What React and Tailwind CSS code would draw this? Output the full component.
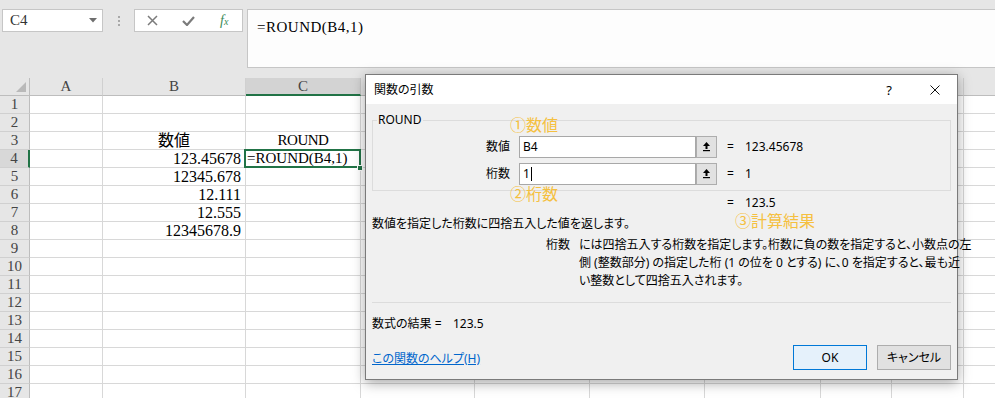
import React from 'react';

const GRID = "grid grid-cols-[30px_73px_143px_115px_114px_115px_115px_116px_71px_72px_72px]";
const LETTERS = ['A', 'B', 'C', 'D', 'E', 'F', 'G', 'H', 'I', 'J'];

const CELLS = {
  3: { B: ['数値', 'center'], C: ['ROUND', 'center'] },
  4: { B: ['123.45678', 'right'] },
  5: { B: ['12345.678', 'right'] },
  6: { B: ['12.111', 'right'] },
  7: { B: ['12.555', 'right'] },
  8: { B: ['12345678.9', 'right'] },
};

function TopBar() {
  return (
    <div className="h-[78px] bg-[#e6e6e6] flex items-start pt-[9px] pl-[2px]">
      <div className="w-[101px] h-[23px] bg-white border border-[#c6c6c6] flex items-center pl-[7px] pr-[5px] justify-between">
        <span className="font-['Liberation_Serif',serif] text-[15px] leading-none text-[#333]">C4</span>
        <svg width="8" height="5" viewBox="0 0 8 5"><polygon points="0,0 8,0 4,4.5" fill="#6e6e6e" /></svg>
      </div>
      <div className="w-[31px] h-[23px] flex flex-col items-center justify-center gap-[2px]">
        <span className="w-[2px] h-[2px] bg-[#a8a8a8]" />
        <span className="w-[2px] h-[2px] bg-[#a8a8a8]" />
        <span className="w-[2px] h-[2px] bg-[#a8a8a8]" />
      </div>
      <div className="w-[109px] h-[23px] bg-white border border-[#c6c6c6] flex items-center">
        <div className="w-[36px] flex justify-center">
          <svg width="11" height="11" viewBox="0 0 11 11"><path d="M1 1 L10 10 M10 1 L1 10" stroke="#7b7b7b" strokeWidth="1.5" /></svg>
        </div>
        <div className="w-[36px] flex justify-center">
          <svg width="13" height="10" viewBox="0 0 13 10"><polyline points="1,5 5,9 12,1" fill="none" stroke="#7b7b7b" strokeWidth="2.2" /></svg>
        </div>
        <div className="w-[36px] flex justify-center">
          <span className="font-['Liberation_Serif',serif] italic text-[14px] leading-none text-[#3a8a58]">f<span className="text-[10px]">x</span></span>
        </div>
      </div>
      <div className="ml-[4px] flex-1 h-[59px] bg-[#fdfdfd] border border-[#c6c6c6] border-r-0 pl-[9px] pt-[4px]">
        <span className="font-['Liberation_Serif',serif] text-[15px] leading-[17px] tracking-[0.5px] text-black">=ROUND(B4,1)</span>
      </div>
    </div>
  );
}

function Sheet() {
  const rows = [];
  for (let r = 1; r <= 17; r++) rows.push(r);
  return (
    <div className="font-['Liberation_Serif','Noto_Sans_CJK_JP',serif]">
      <div className={GRID + " h-[18px]"}>
        <div className="bg-[#e6e6e6] border-r border-b border-[#bdbdbd] flex items-end justify-end pr-[3px] pb-[3px]">
          <svg width="10" height="10" viewBox="0 0 10 10"><polygon points="10,0 10,10 0,10" fill="#b9b9b9" /></svg>
        </div>
        {LETTERS.map((l) => (
          <div
            key={l}
            className={
              l === 'C'
                ? "bg-[#d3d3d3] border-r border-[#c8c8c8] border-b-2 border-b-[#217346] flex items-center justify-center text-[15px] leading-none text-[#444]"
                : "bg-[#e6e6e6] border-r border-b border-r-[#d0d0d0] border-b-[#bdbdbd] flex items-center justify-center text-[15px] leading-none text-[#444]"
            }
          >
            {l === 'J' ? null : l}
          </div>
        ))}
      </div>
      {rows.map((r) => (
        <div key={r} className={GRID + " h-[18px]"}>
          <div
            className={
              r === 4
                ? "bg-[#d8d8d8] border-b border-b-[#d0d0d0] border-r-2 border-r-[#217346] flex items-center justify-center text-[15px] leading-none text-[#444]"
                : "bg-[#e6e6e6] border-b border-r border-b-[#d0d0d0] border-r-[#bdbdbd] flex items-center justify-center text-[15px] leading-none text-[#444]"
            }
          >
            {r}
          </div>
          {LETTERS.map((l) => {
            if (r === 4 && l === 'C') {
              return (
                <div key={l} className="relative border-r border-b border-[#d8d8d8] flex items-center whitespace-nowrap">
                  <div className="absolute -left-[2px] -top-px -right-px -bottom-px border-2 border-[#217346] z-10" />
                  <div className="absolute -right-[3px] -bottom-[4px] w-[6px] h-[6px] bg-[#217346] border border-white z-10" />
                  <span className="pl-px text-[15px] leading-none text-black">=ROUND(B4,1)</span>
                </div>
              );
            }
            const c = CELLS[r] && CELLS[r][l];
            return (
              <div
                key={l}
                className={
                  c && c[1] === 'right'
                    ? "border-r border-b border-[#d8d8d8] flex items-center justify-end pr-[4px] whitespace-nowrap"
                    : "border-r border-b border-[#d8d8d8] flex items-center justify-center whitespace-nowrap"
                }
              >
                {c ? (
                  <span className={c[0] === 'ROUND' ? "text-[15px] tracking-[-0.5px] leading-none text-black" : "text-[16px] leading-none text-black"}>{c[0]}</span>
                ) : null}
              </div>
            );
          })}
        </div>
      ))}
    </div>
  );
}

function UpArrow() {
  return (
    <svg width="7" height="10" viewBox="0 0 7 10">
      <polygon points="3.5,0 7,4 0,4" fill="#000" />
      <rect x="2.5" y="4" width="2" height="3" fill="#000" />
      <rect x="0" y="8" width="7" height="1.2" fill="#000" />
    </svg>
  );
}

function ArgRow({ label, value, result, cursor }) {
  return (
    <div className="flex items-center h-[22px]">
      <div className="w-[137px] text-right">{label}</div>
      <div className="ml-[9px] w-[177px] h-[22px] bg-white border border-[#a8a8a8] flex items-center pl-[3px]">
        <span>{value}</span>
        {cursor ? <span className="ml-px w-px h-[14px] bg-black" /> : null}
      </div>
      <div className="w-[21px] h-[22px] bg-[#e1e1e1] border border-[#adadad] flex items-center justify-center">
        <UpArrow />
      </div>
      <span className="ml-[10px] w-[18px]">=</span>
      <span>{result}</span>
    </div>
  );
}

function Dialog() {
  return (
    <div className="absolute left-[365px] top-[74px] w-[593px] h-[306px] z-20 bg-[#f0f0f0] border border-[#7a7a7a] shadow-[0_3px_12px_rgba(0,0,0,0.35)] flex flex-col font-['Noto_Sans','Noto_Sans_CJK_JP',sans-serif] text-[12px] leading-[16px] text-black [font-feature-settings:'palt']">
      <div className="h-[29px] shrink-0 bg-white flex items-center pl-[8px]">
        <span>関数の引数</span>
        <span className="ml-auto text-[13px]">?</span>
        <svg className="ml-[38px] mr-[17px]" width="10" height="10" viewBox="0 0 10 10">
          <path d="M0.5 0.5 L9.5 9.5 M9.5 0.5 L0.5 9.5" stroke="#111" strokeWidth="1" />
        </svg>
      </div>
      <div className="px-[6px] flex flex-col">
        <div className="relative mt-[16px] h-[71px] border border-[#dcdcdc] flex flex-col pt-[15px] gap-[5px]">
          <span className="absolute left-[4px] -top-[9px] px-px bg-[#f0f0f0] leading-[16px]">ROUND</span>
          <ArgRow label="数値" value="B4" result="123.45678" />
          <ArgRow label="桁数" value="1" result="1" cursor />
        </div>
        <div className="mt-[4px] h-[16px] pl-[355px] flex">
          <span className="w-[18px]">=</span>
          <span>123.5</span>
        </div>
        <div className="mt-[5px] h-[16px] whitespace-nowrap">数値を指定した桁数に四捨五入した値を返します。</div>
        <div className="mt-[4px] flex leading-[18px] h-[54px]">
          <div className="w-[198px] text-right shrink-0">桁数</div>
          <div className="ml-[9px] whitespace-nowrap">
            には四捨五入する桁数を指定します。桁数に負の数を指定すると、小数点の左<br />
            側 (整数部分) の指定した桁 (1 の位を 0 とする) に、0 を指定すると、最も近<br />
            い整数として四捨五入されます。
          </div>
        </div>
        <div className="mt-[12px] border-t border-[#dcdcdc]" />
        <div className="mt-[13px] h-[16px] flex whitespace-nowrap">
          <span className="w-[81px]">数式の結果 =</span>
          <span>123.5</span>
        </div>
        <div className="mt-[13px] h-[25px] flex items-center">
          <span className="text-[#0066cc] underline mt-[2px]">この関数のヘルプ(H)</span>
          <div className="ml-auto w-[74px] h-[25px] bg-[#e5f1fb] border border-[#0078d7] flex items-center justify-center">OK</div>
          <div className="ml-[10px] w-[74px] h-[25px] bg-[#e1e1e1] border border-[#adadad] flex items-center justify-center">キャンセル</div>
        </div>
      </div>
    </div>
  );
}

function Annotations() {
  const cls = "absolute z-30 font-['Noto_Sans_CJK_JP',sans-serif] text-[16px] leading-none text-[#f5c040] whitespace-nowrap";
  return (
    <>
      <span className={cls + " left-[510px] top-[116px]"}>①数値</span>
      <span className={cls + " left-[510px] top-[185px]"}>②桁数</span>
      <span className={cls + " left-[735px] top-[212px]"}>③計算結果</span>
    </>
  );
}

export default function App() {
  return (
    <div className="relative w-[995px] h-[398px] overflow-hidden bg-white">
      <TopBar />
      <Sheet />
      <Dialog />
      <Annotations />
    </div>
  );
}
